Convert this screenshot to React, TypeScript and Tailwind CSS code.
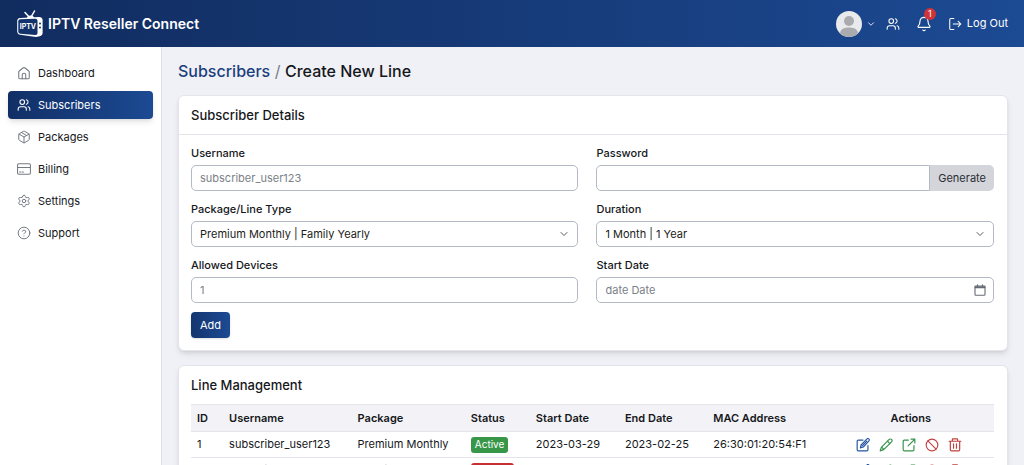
import type { ReactNode } from 'react';
import {
  Bell,
  ChevronDown,
  CircleQuestionMark,
  Package,
  Settings,
  Users,
} from 'lucide-react';

type Line = {
  id: number;
  username: string;
  plan: string;
  status: 'Active' | 'Expired';
  startDate: string;
  endDate: string;
  mac: string;
};

const lines: Line[] = [
  {
    id: 1,
    username: 'subscriber_user123',
    plan: 'Premium Monthly',
    status: 'Active',
    startDate: '2023-03-29',
    endDate: '2023-02-25',
    mac: '26:30:01:20:54:F1',
  },
  {
    id: 2,
    username: 'subscriber_user124',
    plan: 'Premium Monthly',
    status: 'Expired',
    startDate: '2023-03-29',
    endDate: '2023-02-25',
    mac: '26:30:01:20:54:F2',
  },
];

const fieldClass =
  'block h-[26px] w-full rounded-[5px] border border-[#b3bac3] bg-white px-2 text-[11px] text-[#1b1d21] placeholder:text-[#7b7f87] outline-none focus:border-[#1c4a93]';

function StrokeIcon({ className, width = 1.8, children }: { className: string; width?: number; children: ReactNode }) {
  return (
    <svg viewBox="0 0 24 24" className={className} fill="none" stroke="currentColor" strokeWidth={width} strokeLinecap="round" strokeLinejoin="round" aria-hidden="true">
      {children}
    </svg>
  );
}

function HomeIcon() {
  return (
    <StrokeIcon className="size-3.5">
      <path d="M3 10.2a2 2 0 0 1 .8-1.6l7-5.600a2 2 0 0 1 2.400 0l7 5.600a2 2 0 0 1 .8 1.600V20a2 2 0 0 1-2 2H5a2 2 0 0 1-2-2z" />
      <path d="M9 22v-6.500a3 3 0 0 1 6 0V22" />
    </StrokeIcon>
  );
}

function CardIcon() {
  return (
    <StrokeIcon className="size-3.5">
      <rect x="1" y="3" width="22" height="18" rx="2" />
      <path d="M1 9.500h22M4.500 17h1.500M8.500 17h2.500" />
    </StrokeIcon>
  );
}

function CalendarIcon() {
  return (
    <StrokeIcon className="size-3" width={2.2}>
      <rect x="2" y="4" width="20" height="18.500" rx="1.500" />
      <path d="M3 6.500h18" strokeWidth="4" />
      <path d="M7 1.500V5M17 1.500V5" />
    </StrokeIcon>
  );
}

function LogOutIcon() {
  return (
    <StrokeIcon className="size-3.5">
      <path d="M10 2.500H5a2 2 0 0 0-2 2v15a2 2 0 0 0 2 2h5M9 12h13M17.500 7.500 22 12l-4.500 4.500" />
    </StrokeIcon>
  );
}

function EditIcon() {
  return (
    <StrokeIcon className="size-3.5" width={2}>
      <path d="M12 3.500H4a2 2 0 0 0-2 2V20a2 2 0 0 0 2 2h14.500a2 2 0 0 0 2-2v-7" />
      <path d="M18.500 1.800a2.300 2.300 0 0 1 3.600 3.200L12.500 15.500 7.500 17l1.200-5z" />
      <path d="m10.500 14 8-8.500" />
    </StrokeIcon>
  );
}

function PencilIcon() {
  return (
    <StrokeIcon className="size-3.5" width={2}>
      <path d="M17.500 2.500a2.800 2.800 0 0 1 4 4L8 20l-6 2 2-6z" />
      <path d="m14.500 5.500 4 4M5 16l3 3.500" />
    </StrokeIcon>
  );
}

function OpenIcon() {
  return (
    <StrokeIcon className="size-3.5" width={2}>
      <path d="M11 3.500H4a2 2 0 0 0-2 2V20a2 2 0 0 0 2 2h14.500a2 2 0 0 0 2-2v-7M15.500 2H22v6.500M22 2 10.500 13.500" />
    </StrokeIcon>
  );
}

function BlockIcon() {
  return (
    <StrokeIcon className="size-3.5" width={1.9}>
      <circle cx="12" cy="12" r="10" />
      <path d="m5 5 14 14" />
    </StrokeIcon>
  );
}

function TrashIcon() {
  return (
    <StrokeIcon className="size-3.5" width={2}>
      <path d="M2 5.500h20M7.500 5.500v-3a1 1 0 0 1 1-1h7a1 1 0 0 1 1 1v3M4 5.500V20a2 2 0 0 0 2 2h12a2 2 0 0 0 2-2V5.500M9.500 10v7.500M14.500 10v7.500" />
    </StrokeIcon>
  );
}

function Logo() {
  return (
    <svg viewBox="0 0 28 28" className="size-7" aria-hidden="true">
      <path d="M9 2.500 14 8M18.500 1 14.500 8" stroke="#fff" strokeWidth="1.500" strokeLinecap="round" />
      <path d="M11 8a3.500 2.500 0 0 1 7 0z" fill="#fff" />
      <path d="M4 8 23 7q3.400 0 3.600 3.200v12.500q0 2.600-3 3.600l-3.600.7-16-2.200q-2.600-.4-2.800-3V11q.2-2.800 2.800-3z" fill="#fff" />
      <path d="M4.200 9.200 19.400 8.700q2 0 2.100 2v12.300q0 2.200-2.200 2.100L4.500 23.700q-2.100-.2-2.200-2V11.200q.1-1.900 1.900-2z" fill="#12326b" />
      <circle cx="24" cy="13.500" r="1" fill="#12326b" />
      <circle cx="24" cy="17.500" r="1" fill="#12326b" />
      <text x="11.900" y="19" textAnchor="middle" fill="#fff" fontSize="7" fontWeight="700" fontFamily="Inter, sans-serif">
        IPTV
      </text>
    </svg>
  );
}

function Avatar() {
  return (
    <svg viewBox="0 0 26 26" className="size-[26px] rounded-full" aria-hidden="true">
      <rect width="26" height="26" fill="#e9eaec" />
      <circle cx="13" cy="10" r="5" fill="#a9abaf" />
      <path d="M4 23c0-4.500 3.500-6.500 9-6.500s9 2 9 6.500v3H4z" fill="#a9abaf" />
    </svg>
  );
}

const navItems: { label: string; icon: ReactNode; active?: boolean }[] = [
  { label: 'Dashboard', icon: <HomeIcon /> },
  { label: 'Subscribers', icon: <Users className="size-3.5" strokeWidth={1.8} />, active: true },
  { label: 'Packages', icon: <Package className="size-3.5" strokeWidth={1.7} /> },
  { label: 'Billing', icon: <CardIcon /> },
  { label: 'Settings', icon: <Settings className="size-3.5" strokeWidth={1.7} /> },
  { label: 'Support', icon: <CircleQuestionMark className="size-3.5" strokeWidth={1.7} /> },
];

function Field({ id, label, children }: { id: string; label: string; children: ReactNode }) {
  return (
    <div className="flex flex-col gap-1">
      <label htmlFor={id} className="text-[11px] leading-4 font-medium">
        {label}
      </label>
      {children}
    </div>
  );
}

function SelectField({ id, label, option }: { id: string; label: string; option: string }) {
  return (
    <Field id={id} label={label}>
      <div className="relative">
        <select id={id} className={`${fieldClass} appearance-none pr-8`}>
          <option>{option}</option>
        </select>
        <ChevronDown className="pointer-events-none absolute top-1/2 right-2 size-3 -translate-y-1/2 text-[#555b65]" />
      </div>
    </Field>
  );
}

function RowActions() {
  return (
    <div className="flex items-center justify-center gap-[9px] pr-1">
      <button type="button" aria-label="Edit line" className="text-[#2456a0]">
        <EditIcon />
      </button>
      <button type="button" aria-label="Rename" className="text-[#36924a]">
        <PencilIcon />
      </button>
      <button type="button" aria-label="Open" className="text-[#36924a]">
        <OpenIcon />
      </button>
      <button type="button" aria-label="Block" className="text-[#c0413f]">
        <BlockIcon />
      </button>
      <button type="button" aria-label="Delete" className="text-[#c0413f]">
        <TrashIcon />
      </button>
    </div>
  );
}

export default function App() {
  return (
    <div className="flex h-screen flex-col bg-[#f0f1f6] font-['Inter',sans-serif] text-[#15171b]">
      <header className="flex h-[47px] shrink-0 items-center justify-between bg-linear-to-r from-[#112c5f] to-[#1c4a93] px-4 text-white">
        <a href="#" className="flex items-center gap-1">
          <Logo />
          <span className="text-sm font-semibold">IPTV Reseller Connect</span>
        </a>
        <div className="flex items-center">
          <button type="button" aria-label="Account" className="flex items-center gap-1">
            <Avatar />
            <ChevronDown className="size-2.5" />
          </button>
          <button type="button" aria-label="Users" className="ml-2.5">
            <Users className="size-3.5" strokeWidth={1.8} />
          </button>
          <button type="button" aria-label="Notifications" className="relative ml-4">
            <Bell className="size-4" strokeWidth={1.7} />
            <span className="absolute -top-2 -right-1 flex size-3 items-center justify-center rounded-full bg-[#d03438] text-[9px] leading-3">1</span>
          </button>
          <button type="button" className="ml-4 flex items-center gap-[5px] text-[11px]">
            <LogOutIcon />
            Log Out
          </button>
        </div>
      </header>

      <div className="flex min-h-0 flex-1">
        <aside className="w-[162px] shrink-0 border-r border-[#dfe1e7] bg-white px-2 pt-3">
          <nav className="flex flex-col gap-1">
            {navItems.map((item) => (
              <a
                key={item.label}
                href="#"
                aria-current={item.active ? 'page' : undefined}
                className={
                  item.active
                    ? 'flex h-7 items-center gap-[7px] rounded bg-linear-to-r from-[#112f66] to-[#1c4a93] px-[9px] text-[11px] text-white shadow-md'
                    : 'flex h-7 items-center gap-[7px] rounded px-[9px] text-[11px]'
                }
              >
                <span className={item.active ? 'text-white' : 'text-[#747983]'}>{item.icon}</span>
                {item.label}
              </a>
            ))}
          </nav>
        </aside>

        <main className="min-w-0 flex-1 overflow-y-auto px-4 pt-3 pb-4 [scrollbar-width:none]">
          <h1 className="text-base leading-6 font-medium">
            <a href="#" className="text-[#1b3f7c]">Subscribers</a>
            <span className="font-normal text-[#777c86]"> / </span>
            Create New Line
          </h1>

          <section className="mt-3 rounded-md border border-[#e3e5ea] bg-white shadow-md">
            <h2 className="border-b border-[#e3e5ea] px-3 py-2 text-[13px] leading-[22px] font-medium">Subscriber Details</h2>
            <form className="pt-2.5 pr-[13px] pb-3 pl-3" onSubmit={(event) => event.preventDefault()}>
              <div className="grid grid-cols-[387fr_397fr] gap-x-[18px] gap-y-2.5">
                <Field id="username" label="Username">
                  <input id="username" type="text" placeholder="subscriber_user123" className={fieldClass} />
                </Field>
                <Field id="password" label="Password">
                  <div className="flex">
                    <input id="password" type="password" className={`${fieldClass} min-w-0 flex-1 rounded-r-none`} />
                    <button type="button" className="h-[26px] rounded-r-[5px] bg-[#d3d5db] px-2 text-[11px] text-[#2b2e34]">
                      Generate
                    </button>
                  </div>
                </Field>
                <SelectField id="package" label="Package/Line Type" option="Premium Monthly | Family Yearly" />
                <SelectField id="duration" label="Duration" option="1 Month | 1 Year" />
                <Field id="devices" label="Allowed Devices">
                  <input id="devices" type="text" inputMode="numeric" placeholder="1" className={fieldClass} />
                </Field>
                <Field id="start-date" label="Start Date">
                  <div className="relative">
                    <input id="start-date" type="text" placeholder="date Date" className={`${fieldClass} pr-8`} />
                    <button type="button" aria-label="Pick a date" className="absolute top-1/2 right-2 -translate-y-1/2 text-[#666b75]">
                      <CalendarIcon />
                    </button>
                  </div>
                </Field>
              </div>
              <button type="submit" className="mt-[9px] h-[26px] rounded bg-linear-to-r from-[#143570] to-[#1c4a93] px-[9px] text-[11px] text-white shadow">
                Add
              </button>
            </form>
          </section>

          <section className="mt-3.5 rounded-md border border-[#e3e5ea] bg-white pt-2 pr-[13px] pb-3 pl-3 shadow-md">
            <h2 className="text-[13px] leading-[22px] font-medium">Line Management</h2>
            <table className="mt-2 w-full table-fixed border-collapse text-left text-[11px]">
              <colgroup>
                <col className="w-[4%]" />
                <col className="w-[16%]" />
                <col className="w-[14.1%]" />
                <col className="w-[8.1%]" />
                <col className="w-[11.1%]" />
                <col className="w-[11%]" />
                <col className="w-[15%]" />
                <col />
              </colgroup>
              <thead>
                <tr className="h-[27px] border-y border-[#e3e5ea] bg-[#f3f3f7]">
                  <th className="pl-1.5 font-semibold">ID</th>
                  <th className="pl-1.5 font-semibold">Username</th>
                  <th className="pl-1.5 font-semibold">Package</th>
                  <th className="pl-1.5 font-semibold">Status</th>
                  <th className="pl-1.5 font-semibold">Start Date</th>
                  <th className="pl-1.5 font-semibold">End Date</th>
                  <th className="pl-1.5 font-semibold">MAC Address</th>
                  <th className="text-center font-semibold">Actions</th>
                </tr>
              </thead>
              <tbody>
                {lines.map((line) => (
                  <tr key={line.id} className="h-[26px] border-b border-[#e3e5ea]">
                    <td className="pl-1.5">{line.id}</td>
                    <td className="pl-1.5">{line.username}</td>
                    <td className="pl-1.5">{line.plan}</td>
                    <td className="pl-1.5">
                      <span
                        className={
                          line.status === 'Active'
                            ? 'flex h-4 w-fit items-center rounded-[3px] bg-[#389648] px-1 text-[10px] text-white'
                            : 'flex h-4 w-fit items-center rounded-[3px] bg-[#c62f33] px-1 text-[10px] text-white'
                        }
                      >
                        {line.status}
                      </span>
                    </td>
                    <td className="pl-1.5">{line.startDate}</td>
                    <td className="pl-1.5">{line.endDate}</td>
                    <td className="pl-1.5">{line.mac}</td>
                    <td>
                      <RowActions />
                    </td>
                  </tr>
                ))}
              </tbody>
            </table>
          </section>
        </main>
      </div>
    </div>
  );
}
